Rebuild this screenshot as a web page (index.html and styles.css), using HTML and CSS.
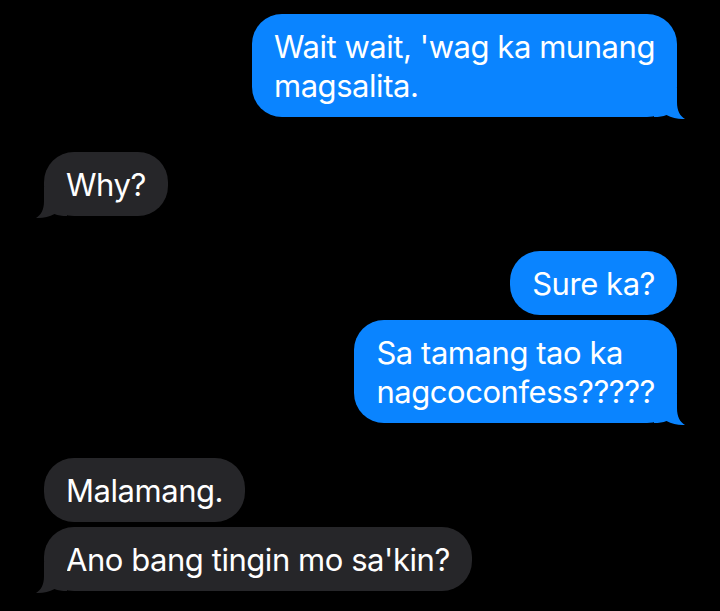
FILE: index.html
```html
<!DOCTYPE html>
<html>
<head>
<meta charset="utf-8">
<link rel="stylesheet" href="styles.css">
</head>
<body>
<div class="chat">
  <div class="group sent">
    <div class="bubble tail">Wait wait, 'wag ka munang<br>magsalita.<svg class="tailsvg" viewBox="0 0 32 32" width="32" height="32"><path d="M0 0 H23 V14 C23 23 26 28 31 31 C25 31.5 18 30 12.5 27 C9 28.5 5 29 0 29 Z"/></svg></div>
  </div>
  <div class="group recv">
    <div class="bubble tail">Why?<svg class="tailsvg" viewBox="0 0 32 32" width="32" height="32"><path d="M0 0 H23 V14 C23 23 26 28 31 31 C25 31.5 18 30 12.5 27 C9 28.5 5 29 0 29 Z"/></svg></div>
  </div>
  <div class="group sent">
    <div class="bubble">Sure ka?</div>
    <div class="bubble tail">Sa tamang tao ka<br>nagcoconfess?????<svg class="tailsvg" viewBox="0 0 32 32" width="32" height="32"><path d="M0 0 H23 V14 C23 23 26 28 31 31 C25 31.5 18 30 12.5 27 C9 28.5 5 29 0 29 Z"/></svg></div>
  </div>
  <div class="group recv">
    <div class="bubble">Malamang.</div>
    <div class="bubble tail">Ano bang tingin mo sa'kin?<svg class="tailsvg" viewBox="0 0 32 32" width="32" height="32"><path d="M0 0 H23 V14 C23 23 26 28 31 31 C25 31.5 18 30 12.5 27 C9 28.5 5 29 0 29 Z"/></svg></div>
  </div>
</div>
</body>
</html>
```

FILE: styles.css
```css
html, body {
  margin: 0;
  padding: 0;
  background: #000;
}
body {
  width: 720px;
  height: 611px;
  overflow: hidden;
  font-family: "Inter", "Liberation Sans", sans-serif;
  color: #fff;
}
.chat {
  display: flex;
  flex-direction: column;
  gap: 35px;
  padding: 14px 43px 0 44px;
}
.group {
  display: flex;
  flex-direction: column;
  gap: 5px;
}
.group.sent {
  align-items: flex-end;
}
.group.recv {
  align-items: flex-start;
}
.bubble {
  position: relative;
  font-size: 31px;
  line-height: 39px;
  letter-spacing: -0.45px;
  padding: 13px 22px 12px 22px;
  border-radius: 30px;
}
.sent .bubble {
  background: #0a84ff;
}
.recv .bubble {
  background: #262629;
}
.tailsvg {
  position: absolute;
  bottom: -3px;
  display: block;
}
.sent .tailsvg {
  right: -9px;
  fill: #0a84ff;
}
.recv .tailsvg {
  left: -9px;
  transform: scaleX(-1);
  fill: #262629;
}
```
